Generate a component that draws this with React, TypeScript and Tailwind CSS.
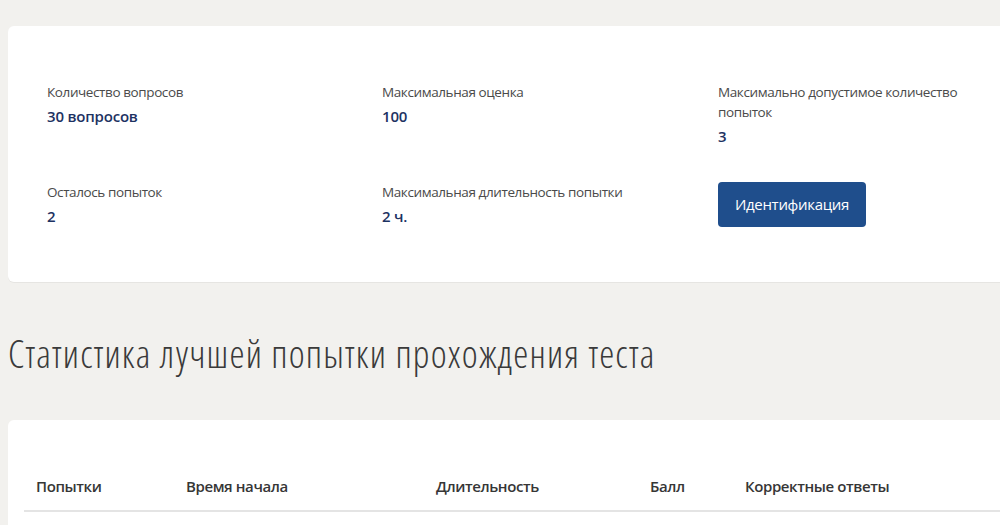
const stats = [
  { label: "Количество вопросов", value: "30 вопросов" },
  { label: "Максимальная оценка", value: "100" },
  { label: "Максимально допустимое количество попыток", value: "3" },
  { label: "Осталось попыток", value: "2" },
  { label: "Максимальная длительность попытки", value: "2 ч." },
];

const columns = [
  { title: "Попытки", width: "w-[150px]" },
  { title: "Время начала", width: "w-[250px]" },
  { title: "Длительность", width: "w-[214px]" },
  { title: "Балл", width: "w-[95px]" },
  { title: "Корректные ответы", width: "flex-1" },
];

function StatItem({ label, value }: { label: string; value: string }) {
  return (
    <div className="max-w-[250px]">
      <p className="text-[13.5px] leading-5 tracking-[-0.4px] text-[#4a4a4a]">{label}</p>
      <p className="mt-[4px] text-[15px] leading-5 font-semibold tracking-[-0.2px] text-[#1d3262]">{value}</p>
    </div>
  );
}

export default function App() {
  return (
    <div className="min-h-[525px] overflow-hidden bg-[#f2f1ee] font-['Open_Sans',sans-serif]">
      <div className="w-[1040px] pl-2 pt-[26px]">
        <section className="rounded-l-md bg-white px-[39px] pt-[56px] pb-[55px] shadow-[0_1px_0_#e6e5e2]">
          <div className="grid grid-cols-[335px_336px_1fr] gap-y-[36px]">
            {stats.slice(0, 3).map((s) => (
              <StatItem key={s.label} label={s.label} value={s.value} />
            ))}
            {stats.slice(3).map((s) => (
              <StatItem key={s.label} label={s.label} value={s.value} />
            ))}
            <div>
              <button
                type="button"
                className="h-[45px] w-[148px] rounded-[4px] bg-[#1f4e8c] text-[15px] font-medium tracking-[-0.3px] text-white"
              >
                Идентификация
              </button>
            </div>
          </div>
        </section>

        <h2 className="mt-[50px] text-[38px] leading-[42px] font-light font-stretch-condensed tracking-[1.2px] text-[#3a3a3a]">
          Статистика лучшей попытки прохождения теста
        </h2>

        <section className="mt-[46px] rounded-l-md bg-white px-4 pt-[42px] pb-6">
          <div className="flex border-b-2 border-[#e4e4e4]">
            {columns.map((c) => (
              <div
                key={c.title}
                className={`${c.width} px-3 py-3 text-[15px] leading-6 font-semibold tracking-[-0.4px] text-[#363636]`}
              >
                {c.title}
              </div>
            ))}
          </div>
        </section>
      </div>
    </div>
  );
}
